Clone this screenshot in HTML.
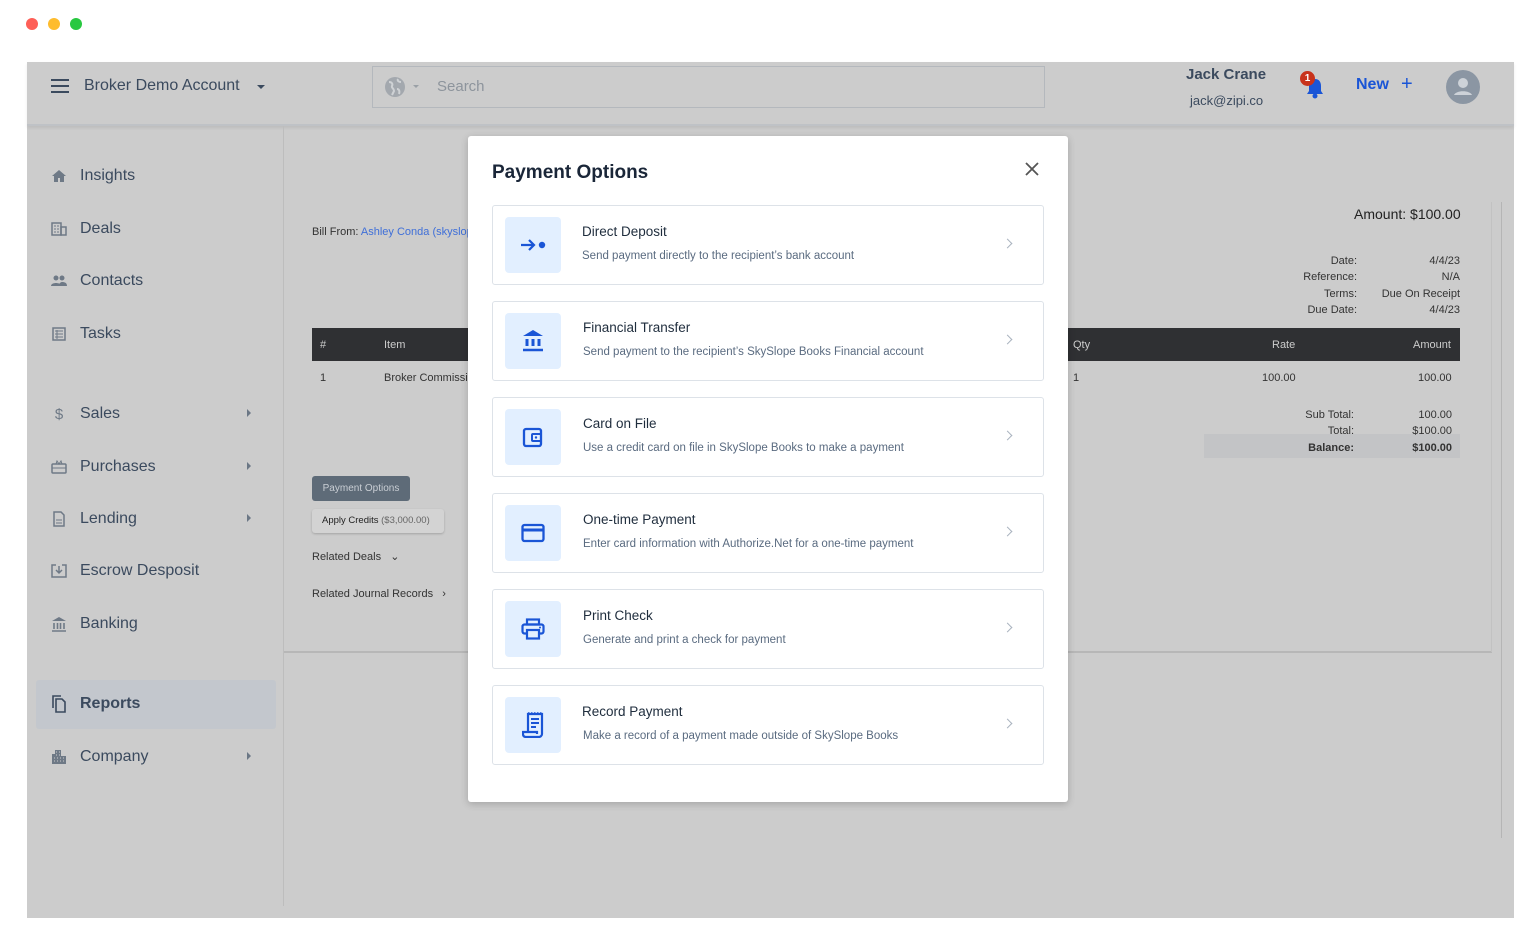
<!DOCTYPE html>
<html><head><meta charset="utf-8">
<style>
*{box-sizing:border-box;margin:0;padding:0}
body{width:1536px;height:939px;background:#fff;position:relative;overflow:hidden;font-family:"Liberation Sans",sans-serif}
.a{position:absolute}
.dot{position:absolute;top:18px;width:12px;height:12px;border-radius:50%}
#app{left:27px;top:62px;width:1487px;height:856px;background:#cccccc}
.hdr{left:0;top:0;width:1487px;height:64px;border-bottom:2px solid #bfc2c6;box-shadow:0 2px 3px rgba(0,0,0,.08)}
.nav{position:absolute;left:24px;font-size:16px;color:#3b4a5e;display:flex;align-items:center}
.nav svg{margin-right:13px}
.caret{position:absolute;left:220px;width:0;height:0;border-top:4px solid transparent;border-bottom:4px solid transparent;border-left:4px solid #6b7785}
.sm{font-size:11px;color:#333}
.r{text-align:right}
.card{position:absolute;left:24px;width:552px;height:80px;border:1px solid #dde2e8;border-radius:3px;background:#fff}
.ic{position:absolute;left:12px;top:11px;width:56px;height:56px;background:#e2efff;border-radius:4px;display:flex;align-items:center;justify-content:center}
.t1{position:absolute;left:90px;top:18px;font-size:13.5px;color:#1f2d3d}
.t2{position:absolute;left:90px;top:44px;font-size:11.5px;color:#5a6b80}
.chev{position:absolute;right:32px;top:34px;width:7px;height:7px;border-right:1.3px solid #aab3bf;border-top:1.3px solid #aab3bf;transform:rotate(45deg)}
</style></head><body>
<div class="dot" style="left:26px;background:#fe5f57"></div>
<div class="dot" style="left:48px;background:#febc2e"></div>
<div class="dot" style="left:70px;background:#28c840"></div>

<div id="app" class="a">
 <div class="a hdr">
  <svg class="a" style="left:24px;top:17px" width="18" height="14" viewBox="0 0 18 14"><path d="M0 1h18M0 7h18M0 13h18" stroke="#3b4a5e" stroke-width="2"/></svg>
  <div class="a" style="left:57px;top:15px;font-size:16px;color:#3b4a5e">Broker Demo Account</div>
  <div class="a" style="left:230px;top:23px;border-left:4px solid transparent;border-right:4px solid transparent;border-top:4px solid #3b4a5e"></div>
  <div class="a" style="left:345px;top:4px;width:673px;height:42px;border:1px solid #b4b8bd"></div>
  <svg class="a" style="left:357px;top:14px" width="22" height="22" viewBox="0 0 22 22"><circle cx="11" cy="11" r="10" fill="#a3a8ae"/><path d="M5 6c3 0 4 2 3 4s2 2 2 5l-2 4M14 3c-1 2 1 3 3 3M13 13c2 0 3 2 2 5" stroke="#cfd2d5" stroke-width="2" fill="none"/></svg>
  <div class="a" style="left:386px;top:23px;border-left:3px solid transparent;border-right:3px solid transparent;border-top:3px solid #9aa0a6"></div>
  <div class="a" style="left:410px;top:16px;font-size:15px;color:#8d949c">Search</div>
  <div class="a" style="left:1159px;top:4px;font-size:15px;font-weight:bold;color:#3b4a5e">Jack Crane</div>
  <div class="a" style="left:1163px;top:31px;font-size:13px;color:#3b4a5e">jack@zipi.co</div>
  <svg class="a" style="left:1278px;top:15px" width="20" height="22" viewBox="0 0 20 22"><path d="M10 2c4 0 6 3 6 7v5l2 3H2l2-3V9c0-4 2-7 6-7z" fill="#1a55d6"/><circle cx="10" cy="19" r="2.5" fill="#1a55d6"/></svg>
  <div class="a" style="left:1273px;top:9px;width:15px;height:15px;border-radius:50%;background:#c8331c;color:#fff;font-size:10px;font-weight:bold;text-align:center;line-height:15px">1</div>
  <div class="a" style="left:1329px;top:14px;font-size:16px;font-weight:bold;color:#1a55d6">New</div>
  <div class="a" style="left:1374px;top:11px;font-size:20px;color:#1a55d6">+</div>
  <svg class="a" style="left:1419px;top:8px" width="34" height="34" viewBox="0 0 34 34"><circle cx="17" cy="17" r="17" fill="#8b96a3"/><circle cx="17" cy="13" r="5" fill="#cdd2d8"/><path d="M8 25c2-5 16-5 18 0z" fill="#cdd2d8"/></svg>
 </div>
 <div class="a" style="left:256px;top:64px;width:1px;height:780px;background:#bdbdbd"></div>
 <!-- sidebar -->
 <div class="nav" style="top:105px"><svg width="16" height="14" viewBox="0 0 16 14"><path d="M8 1L1 7h2v6h4V9h2v4h4V7h2z" fill="#6e7986"/></svg>Insights</div>
 <div class="nav" style="top:158px"><svg width="16" height="14" viewBox="0 0 16 14"><rect x="1" y="1" width="9" height="12" fill="none" stroke="#6e7986" stroke-width="1.5"/><rect x="10" y="5" width="5" height="8" fill="none" stroke="#6e7986" stroke-width="1.5"/><path d="M3 4h2M3 7h2M6 4h2M6 7h2M3 10h2M6 10h2" stroke="#6e7986"/></svg>Deals</div>
 <div class="nav" style="top:210px"><svg width="16" height="14" viewBox="0 0 16 14"><circle cx="5" cy="4" r="2.5" fill="#6e7986"/><circle cx="11" cy="4" r="2.5" fill="#6e7986"/><path d="M0 12c0-4 10-4 10 0zM8 12c0-3 2-4 3-4 3 0 5 1 5 4z" fill="#6e7986"/></svg>Contacts</div>
 <div class="nav" style="top:263px"><svg width="16" height="14" viewBox="0 0 16 14"><rect x="2" y="1" width="12" height="12" fill="none" stroke="#6e7986" stroke-width="1.5"/><path d="M4 4h8M4 7h8M4 10h8M6 3v9" stroke="#6e7986"/></svg>Tasks</div>
 <div class="nav" style="top:343px"><span style="width:16px;margin-right:13px;color:#6e7986;font-size:15px;text-align:center">$</span>Sales</div>
 <div class="nav" style="top:396px"><svg width="16" height="14" viewBox="0 0 16 14"><rect x="1" y="4" width="14" height="9" rx="1" fill="none" stroke="#6e7986" stroke-width="1.5"/><path d="M1 8h14M5 4l1-3 2 3 2-3 1 3" stroke="#6e7986" fill="none"/></svg>Purchases</div>
 <div class="nav" style="top:448px"><svg width="16" height="16" viewBox="0 0 16 16"><path d="M3 1h7l3 3v11H3z" fill="none" stroke="#6e7986" stroke-width="1.5"/><path d="M5 9h6M5 12h6" stroke="#6e7986"/></svg>Lending</div>
 <div class="nav" style="top:500px"><svg width="16" height="16" viewBox="0 0 16 16"><path d="M5 2H1v12h14V2h-4" fill="none" stroke="#6e7986" stroke-width="1.5"/><path d="M8 3v7M5 7l3 3 3-3" stroke="#6e7986" stroke-width="1.5" fill="none"/></svg>Escrow Desposit</div>
 <div class="nav" style="top:553px"><svg width="16" height="16" viewBox="0 0 16 16"><path d="M8 1L1 5h14z" fill="#6e7986"/><path d="M3 7v6M6.5 7v6M9.5 7v6M13 7v6M1 15h14" stroke="#6e7986" stroke-width="1.6"/></svg>Banking</div>
 <div class="a" style="left:9px;top:618px;width:240px;height:49px;background:#c3c7cd;border-radius:3px"></div>
 <div class="nav" style="top:633px;font-weight:bold"><svg width="16" height="18" viewBox="0 0 16 18"><path d="M2 13V1h8" fill="none" stroke="#3b4a5e" stroke-width="1.6"/><path d="M5 4h6l3 3v10H5z" fill="none" stroke="#3b4a5e" stroke-width="1.6"/></svg>Reports</div>
 <div class="nav" style="top:686px"><svg width="16" height="16" viewBox="0 0 16 16"><path d="M4 1h6v6h5v8H1V5h3z" fill="#6e7986"/><path d="M5 3h1M8 3h1M5 6h1M8 6h1M3 9h1M6 9h1M9 9h1M12 9h1M3 12h1M6 12h1M9 12h1M12 12h1" stroke="#cccccc"/></svg>Company</div>
 <div class="caret" style="top:347px"></div><div class="caret" style="top:400px"></div><div class="caret" style="top:452px"></div><div class="caret" style="top:690px"></div>

 <!-- content -->
 <div class="a" style="left:257px;top:589px;width:1208px;height:2px;background:#b7b7b7"></div>
 <div class="a" style="left:1464px;top:140px;width:1px;height:450px;background:#c2c2c2"></div>
 <div class="a" style="left:1474px;top:140px;width:1px;height:636px;background:#b5b5b5"></div>
 <div class="a sm" style="left:285px;top:164px">Bill From: <span style="color:#3f6fd8">Ashley Conda (skyslope)</span></div>
 <div class="a" style="left:1327px;top:144px;font-size:14px;color:#222">Amount: $100.00</div>
 <div class="a sm r" style="left:1230px;top:191px;width:100px;line-height:16.3px">Date:<br>Reference:<br>Terms:<br>Due Date:</div>
 <div class="a sm r" style="left:1333px;top:191px;width:100px;line-height:16.3px">4/4/23<br>N/A<br>Due On Receipt<br>4/4/23</div>
 <div class="a" style="left:285px;top:266px;width:1148px;height:33px;background:#2f3033"></div>
 <div class="a sm" style="left:293px;top:277px;color:#ccc">#</div>
 <div class="a sm" style="left:357px;top:277px;color:#ccc">Item</div>
 <div class="a sm" style="left:1046px;top:277px;color:#ccc">Qty</div>
 <div class="a sm" style="left:1245px;top:277px;color:#ccc">Rate</div>
 <div class="a sm" style="left:1386px;top:277px;color:#ccc">Amount</div>
 <div class="a sm" style="left:293px;top:310px">1</div>
 <div class="a sm" style="left:357px;top:310px">Broker Commission</div>
 <div class="a sm" style="left:1046px;top:310px">1</div>
 <div class="a sm" style="left:1235px;top:310px">100.00</div>
 <div class="a sm" style="left:1391px;top:310px">100.00</div>
 <div class="a" style="left:1177px;top:372px;width:256px;height:24px;background:#c3c4c6"></div>
 <div class="a sm r" style="left:1227px;top:345px;width:100px;line-height:16.3px">Sub Total:<br>Total:<br><b>Balance:</b></div>
 <div class="a sm r" style="left:1325px;top:345px;width:100px;line-height:16.3px">100.00<br>$100.00<br><b>$100.00</b></div>
 <div class="a" style="left:285px;top:414px;width:98px;height:25px;background:#5e6b78;border-radius:3px;color:#c9ced4;font-size:10px;text-align:center;line-height:25px">Payment Options</div>
 <div class="a" style="left:285px;top:447px;width:132px;height:24px;background:#d3d3d3;border-radius:3px;box-shadow:0 1px 2px rgba(0,0,0,.2);font-size:9.5px;line-height:24px;padding-left:10px;color:#222">Apply Credits <span style="color:#666">($3,000.00)</span></div>
 <div class="a sm" style="left:285px;top:488px">Related Deals &nbsp;&nbsp;⌄</div>
 <div class="a sm" style="left:285px;top:526px">Related Journal Records &nbsp;&nbsp;›</div>

 <!-- modal -->
 <div class="a" style="left:441px;top:74px;width:600px;height:666px;background:#fff;border-radius:3px;box-shadow:0 2px 8px rgba(0,0,0,.2)">
  <div class="a" style="left:24px;top:26px;font-size:19px;font-weight:bold;color:#1a2638">Payment Options</div>
  <svg class="a" style="left:557px;top:26px" width="14" height="14" viewBox="0 0 14 14"><path d="M1 1l12 12M13 1L1 13" stroke="#555" stroke-width="1.8"/></svg>

  <div class="card" style="top:69px"><div class="ic"><svg width="28" height="14" viewBox="0 0 28 14"><path d="M2 7h13M10 2l5 5-5 5" stroke="#1a55d6" stroke-width="2.2" fill="none"/><circle cx="23" cy="7" r="3.2" fill="#1a55d6"/></svg></div><div class="t1" style="left:89px">Direct Deposit</div><div class="t2" style="left:89px">Send payment directly to the recipient’s bank account</div><div class="chev"></div></div>

  <div class="card" style="top:165px"><div class="ic"><svg width="22" height="24" viewBox="0 0 22 24"><path d="M11 1L1 7h20z" fill="#1a55d6"/><path d="M5 10v7M11 10v7M17 10v7" stroke="#1a55d6" stroke-width="3"/><path d="M1 21h20" stroke="#1a55d6" stroke-width="2.5"/></svg></div><div class="t1">Financial Transfer</div><div class="t2">Send payment to the recipient’s SkySlope Books Financial account</div><div class="chev"></div></div>

  <div class="card" style="top:261px"><div class="ic"><svg width="22" height="22" viewBox="0 0 22 22"><rect x="2" y="3" width="17" height="17" rx="2" fill="none" stroke="#1a55d6" stroke-width="2.3"/><rect x="10" y="8" width="9" height="7" rx="1" fill="none" stroke="#1a55d6" stroke-width="2"/><circle cx="14" cy="11.5" r="1.2" fill="#1a55d6"/></svg></div><div class="t1">Card on File</div><div class="t2">Use a credit card on file in SkySlope Books to make a payment</div><div class="chev"></div></div>

  <div class="card" style="top:357px"><div class="ic"><svg width="24" height="20" viewBox="0 0 24 20"><rect x="1.5" y="2" width="21" height="16" rx="2" fill="none" stroke="#1a55d6" stroke-width="2.3"/><path d="M1.5 7h21" stroke="#1a55d6" stroke-width="3"/></svg></div><div class="t1">One-time Payment</div><div class="t2">Enter card information with Authorize.Net for a one-time payment</div><div class="chev"></div></div>

  <div class="card" style="top:453px"><div class="ic"><svg width="24" height="22" viewBox="0 0 24 22"><rect x="6" y="1.5" width="12" height="5" fill="none" stroke="#1a55d6" stroke-width="2.2"/><rect x="1.5" y="6.5" width="21" height="9" rx="2" fill="none" stroke="#1a55d6" stroke-width="2.2"/><rect x="6" y="12" width="12" height="8.5" fill="#e2efff" stroke="#1a55d6" stroke-width="2.2"/><circle cx="19" cy="9.5" r="1" fill="#1a55d6"/></svg></div><div class="t1">Print Check</div><div class="t2">Generate and print a check for payment</div><div class="chev"></div></div>

  <div class="card" style="top:549px"><div class="ic"><svg width="22" height="26" viewBox="0 0 22 26"><path d="M6 20V2h14v20c0 2-2 3-3 3H4c-2 0-3-1-3-3v-2h14v2" fill="none" stroke="#1a55d6" stroke-width="2.2"/><path d="M9 7h8M9 11h8M9 15h5" stroke="#1a55d6" stroke-width="2"/><path d="M6 1h14" stroke="#1a55d6" stroke-width="1.5" stroke-dasharray="1.5 1.5"/></svg></div><div class="t1" style="left:89px">Record Payment</div><div class="t2">Make a record of a payment made outside of SkySlope Books</div><div class="chev"></div></div>
 </div>
</div>
</body></html>
